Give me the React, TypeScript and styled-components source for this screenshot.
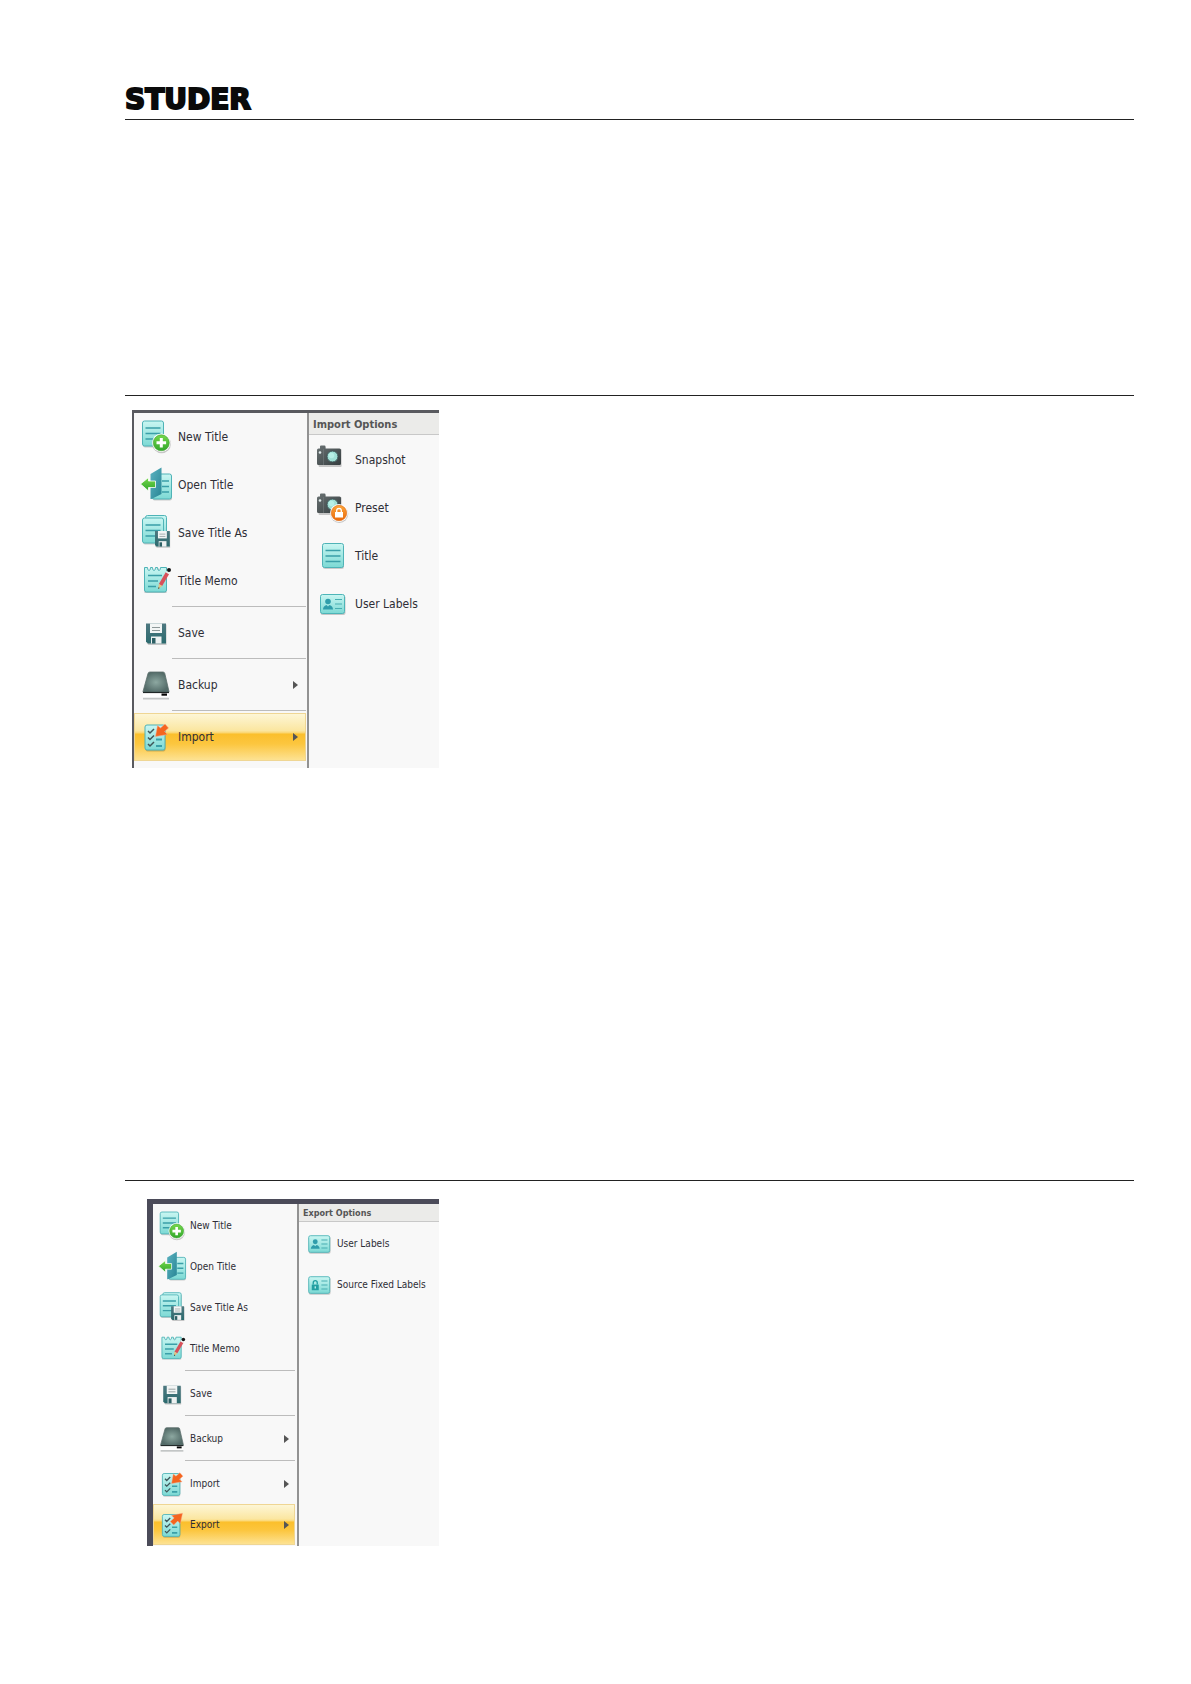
import React from "react";
import styled, { createGlobalStyle } from "styled-components";

const GlobalStyle = createGlobalStyle`
  * { box-sizing: border-box; }
  body { margin: 0; background: #fff; }
`;

const Page = styled.div`
  min-height: 100vh;
  padding: 86px 57px 0 125px;
  font-family: "DejaVu Sans Condensed", "DejaVu Sans", sans-serif;
  color: #333;
`;

const Header = styled.header`
  height: 33px;
`;

const Brand = styled.h1`
  margin: 0;
  font: bold 28px/28px "DejaVu Sans", sans-serif;
  color: #0a0a0a;
  -webkit-text-stroke: 2px #0a0a0a;
`;

const Section = styled.section<{ $space?: number; $inset?: number; $top?: number }>`
  border-top: 1px solid #222;
  padding: ${(p) => p.$top ?? 0}px 0 0 ${(p) => p.$inset ?? 0}px;
  margin-bottom: ${(p) => p.$space ?? 0}px;
`;

const Window = styled.div<{ $small?: boolean }>`
  display: flex;
  width: ${(p) => (p.$small ? 292 : 307)}px;
  max-width: 100%;
  border-style: solid;
  border-width: ${(p) => (p.$small ? "5px 0 0 6px" : "3px 0 0 2px")};
  border-color: ${(p) => (p.$small ? "#4b4b59" : "#595a5f")};
  background: #f8f8f8;
  font-size: ${(p) => (p.$small ? 10 : 12)}px;
`;

const Menu = styled.nav<{ $small?: boolean }>`
  display: flex;
  flex-direction: column;
  flex: none;
  width: ${(p) => (p.$small ? 146 : 175)}px;
  padding: ${(p) => (p.$small ? "1px 2px 1px 0" : "0 1px 7px 0")};
  border-right: 2px solid #929292;
`;

const Item = styled.button<{ $small?: boolean; $active?: boolean }>`
  display: flex;
  align-items: center;
  gap: ${(p) => (p.$small ? 4 : 6)}px;
  width: 100%;
  height: ${(p) => (p.$small ? 41 : 48)}px;
  padding: 0 ${(p) => (p.$small ? 5 : 7)}px 0 ${(p) => (p.$small ? 4 : 5)}px;
  border: 1px solid ${(p) => (p.$active ? "#efd694" : "transparent")};
  background: ${(p) =>
    p.$active
      ? "linear-gradient(#fdf6d6 0%, #fbe6a0 36%, #fbda7c 40%, #fbbf2c 44%, #fcc63f 65%, #fde292 100%)"
      : "none"};
  font: inherit;
  color: #2e2e36;
  text-align: left;
  white-space: nowrap;
`;

const Label = styled.span`
  flex: 1;
`;

const Separator = styled.hr<{ $small?: boolean }>`
  width: auto;
  height: 4px;
  margin: 0 0 0 ${(p) => (p.$small ? 32 : 38)}px;
  border: 0;
  background: linear-gradient(#bcbcbc, #bcbcbc) 0 1px / 100% 1px no-repeat;
`;

const Arrow = styled.span`
  width: 0;
  height: 0;
  border-style: solid;
  border-width: 4px 0 4px 5px;
  border-color: transparent transparent transparent #555;
`;

const Options = styled.div`
  flex: 1;
  min-width: 0;
`;

const OptionsTitle = styled.h2<{ $small?: boolean }>`
  height: ${(p) => (p.$small ? 18 : 22)}px;
  margin: 0 0 1px;
  padding-left: 4px;
  border-bottom: 1px solid #c8c8c8;
  background: #ebebe9;
  font-size: ${(p) => (p.$small ? 9 : 11)}px;
  line-height: ${(p) => (p.$small ? 18 : 23)}px;
  color: #565656;
  white-space: nowrap;
`;

const IconBox = styled.svg<{ $small?: boolean }>`
  flex: none;
  width: ${(p) => (p.$small ? 28 : 32)}px;
  height: ${(p) => (p.$small ? 28 : 32)}px;
  overflow: visible;
`;

const OptionItem = styled(Item)`
  gap: ${(p) => (p.$small ? 6 : 9)}px;
  padding-left: ${(p) => (p.$small ? 3 : 4)}px;
`;

type IconName =
  | "new" | "open" | "saveAs" | "memo" | "save" | "backup" | "import" | "export"
  | "snapshot" | "preset" | "title" | "labels" | "fixed";

const HiddenSvg = styled.svg`
  display: block;
`;

const Defs = () => (
  <HiddenSvg width="0" height="0" aria-hidden="true">
    <defs>
      <linearGradient id="aqua" x1="0" y1="0" x2="0" y2="1">
        <stop offset="0" stopColor="#c9f6f2" />
        <stop offset="1" stopColor="#7cd9d4" />
      </linearGradient>
      <linearGradient id="door" x1="0" y1="0" x2="1" y2="1">
        <stop offset="0" stopColor="#5cb3c1" />
        <stop offset="1" stopColor="#278594" />
      </linearGradient>
      <linearGradient id="green" x1="0" y1="0" x2="0" y2="1">
        <stop offset="0" stopColor="#76d84c" />
        <stop offset="1" stopColor="#31a72b" />
      </linearGradient>
      <linearGradient id="steel" x1="0" y1="0" x2="0" y2="1">
        <stop offset="0" stopColor="#4e7880" />
        <stop offset="1" stopColor="#2b6a6e" />
      </linearGradient>
      <radialGradient id="drive">
        <stop offset="0" stopColor="#8da8a1" />
        <stop offset="1" stopColor="#536b68" />
      </radialGradient>
      <linearGradient id="body" x1="0" y1="0" x2="1" y2="1">
        <stop offset="0" stopColor="#6a7273" />
        <stop offset="1" stopColor="#353d3f" />
      </linearGradient>
      <linearGradient id="orange" x1="0" y1="0" x2="0" y2="1">
        <stop offset="0" stopColor="#fba53a" />
        <stop offset="1" stopColor="#ea6a0c" />
      </linearGradient>
    </defs>
  </HiddenSvg>
);

const Sheet = ({ x, y, w = 21, h = 25, lines = true }: { x: number; y: number; w?: number; h?: number; lines?: boolean }) => (
  <g>
    <rect x={x + 0.5} y={y + 1.5} width={w} height={h} rx="2" fill="#000" opacity=".18" />
    <rect x={x} y={y} width={w} height={h} rx="2" fill="url(#aqua)" stroke="#4fb3b7" />
    {lines && (
      <path
        d={`M${x + 3} ${y + 7}h${w - 6}M${x + 3} ${y + 12.5}h${w - 6}M${x + 3} ${y + 18}h${w - 6}`}
        stroke="#3a9fa8"
        strokeWidth="1.7"
      />
    )}
  </g>
);

const Floppy = () => (
  <g>
    <path d="M0 0H20V20.500H2L0 18.500Z" fill="#000" opacity=".2" transform="translate(.5 1)" />
    <path d="M0 0H20V20H2L0 18Z" fill="url(#steel)" />
    <rect x="4" y="0" width="12" height="9.500" fill="#f2f5f5" />
    <path d="M6 4h8M6 7h8" stroke="#8d9899" strokeWidth="1" />
    <rect x="5" y="13" width="10.500" height="7" fill="#edf1f1" />
    <rect x="6" y="14.500" width="3.500" height="5.500" fill="#2c5f64" />
  </g>
);

const Camera = () => (
  <g>
    <path d="M4 5Q4 4 5 4H6V2H11V4H26Q27 4 27 5V21Q27 22 26 22H5Q4 22 4 21Z" fill="#000" opacity=".2" transform="translate(.6 1)" />
    <path d="M3 6Q3 4.500 4.500 4.500H6V2.500Q6 1.500 7 1.500H10.500Q11.500 1.500 11.500 2.500V4.500H25.500Q27 4.500 27 6V19.500Q27 21 25.500 21H4.500Q3 21 3 19.500Z" fill="url(#body)" />
    <path d="M9.500 5V21" stroke="#737c7d" strokeWidth=".6" />
    <circle cx="6" cy="8.500" r="1.300" fill="#e3eeee" />
    <circle cx="18.500" cy="12.500" r="5.500" fill="#a0e0d6" stroke="#3c5557" strokeWidth="1" />
    <circle cx="17.500" cy="11.500" r="2.800" fill="#b7efe6" />
  </g>
);

const Checklist = () => (
  <g>
    <Sheet x={5} y={4} w={20} h={25} lines={false} />
    <path d="M8 10l2 2 4-4M8 16.500l2 2 4-4M8 23l2 2 4-4" fill="none" stroke="#3f5659" strokeWidth="1.500" />
    <path d="M16 18.500h6M16 25h6" stroke="#3a9fa8" strokeWidth="1.800" />
  </g>
);

const Card = () => (
  <g>
    <rect x="6.500" y="7.500" width="25" height="19.500" rx="2" fill="#000" opacity=".2" />
    <rect x="6.500" y="6.500" width="24" height="19" rx="2" fill="url(#aqua)" stroke="#4db5b8" />
    <path d="M21 11.500h7M21 16h7M21 20.500h7" stroke="#48aeb2" strokeWidth="1.200" />
  </g>
);

const drawings: Record<IconName, React.ReactNode> = {
  new: (
    <>
      <Sheet x={2.5} y={0} />
      <circle cx="21.600" cy="23" r="9.300" fill="#000" opacity=".2" />
      <circle cx="21.300" cy="21.800" r="9.200" fill="#fff" />
      <circle cx="21.300" cy="21.800" r="8" fill="url(#green)" stroke="#3a9f2e" strokeWidth=".6" />
      <path d="M21.300 17v9.600M16.500 21.800h9.600" stroke="#fff" strokeWidth="3" />
    </>
  ),
  open: (
    <>
      <Sheet x={12} y={5} w={19.5} h={25} lines={false} />
      <path d="M22 12h7M22 17.500h7M22 23h7" stroke="#3a9fa8" strokeWidth="1.700" />
      <path d="M10.500 5L21.500 -1.500V25L11.500 30H10.500Z" fill="url(#door)" />
      <path d="M.5 15L8.500 8.500V12H15.500V18.500H8.500V22Z" fill="url(#green)" stroke="#fff" strokeWidth=".8" />
    </>
  ),
  saveAs: (
    <>
      <Sheet x={5.5} y={-1.5} lines={false} />
      <Sheet x={2.5} y={1} />
      <g transform="translate(15 14) scale(.74 .78)"><Floppy /></g>
    </>
  ),
  memo: (
    <>
      <path d="M4.500 3.500H7V6H10V3.500H13V6H16V3.500H19V6H22V3.500H26.500V28H4.500Z" fill="#000" opacity=".2" />
      <path d="M4.500 2.500H7.500Q7.500 5.500 9 5.500T10.500 2.500H12.500Q12.500 5.500 14 5.500T15.500 2.500H17.500Q17.500 5.500 19 5.500T20.500 2.500H26.500V25Q26.500 27 24.500 27H6.500Q4.500 27 4.500 25Z" fill="url(#aqua)" stroke="#4fb3b7" />
      <path d="M8 10.500h14M8 16h10M8 21.500h8" stroke="#3a9fa8" strokeWidth="1.700" />
      <path d="M27.500 8L20.500 20" stroke="#d8505a" strokeWidth="3.800" />
      <path d="M18.800 19L22.200 21L18.300 24Z" fill="#e8c07c" />
      <path d="M18.500 22.200L19.700 23L18.200 24Z" fill="#222" />
      <path d="M27.300 8.300L28.300 6.600" stroke="#eee" strokeWidth="3.800" />
      <circle cx="29" cy="5" r="2" fill="#151515" />
    </>
  ),
  save: <g transform="translate(6 6.500)"><Floppy /></g>,
  backup: (
    <>
      <rect x="3" y="28.500" width="26" height="2" fill="#c3c6c6" />
      <path d="M3 23.500H29V28.500H3Z" fill="#fff" />
      <path d="M8 4.500Q8.300 3 10 3H23Q24.500 3 24.800 4.500L29 22.500Q29 23.500 28 23.500H4Q3 23.500 3 22.500Z" fill="url(#drive)" stroke="#5b6d6b" strokeWidth=".8" />
      <path d="M3 23.500H29" stroke="#1f2727" strokeWidth="1.200" />
      <rect x="21.500" y="24.500" width="5.500" height="2.200" fill="#050505" />
    </>
  ),
  import: (
    <>
      <Checklist />
      <path d="M15.500 15.500L17.500 4.500L20.500 7L25 3L28.500 7L24.500 10.500L27.500 13.500Z" fill="#f4651f" stroke="#fba98a" strokeWidth=".5" />
    </>
  ),
  export: (
    <>
      <Checklist />
      <path d="M28 2.500L25.500 14.500L22.500 11.500L18 16L14 12L18.500 8L15.500 5Z" fill="#f4651f" stroke="#fba98a" strokeWidth=".5" />
    </>
  ),
  snapshot: <Camera />,
  preset: (
    <>
      <Camera />
      <circle cx="25.300" cy="22" r="9" fill="#000" opacity=".2" />
      <circle cx="25" cy="21" r="8.900" fill="#fff" />
      <circle cx="25" cy="21" r="7.700" fill="url(#orange)" stroke="#dd6810" strokeWidth=".6" />
      <rect x="21" y="20" width="8" height="5.500" fill="#fff" />
      <path d="M22.700 20V18.500Q22.700 16.500 25 16.500T27.300 18.500V20" fill="none" stroke="#fff" strokeWidth="1.300" />
    </>
  ),
  title: <Sheet x={8.5} y={3.5} w={21} h={24} />,
  labels: (
    <>
      <Card />
      <circle cx="14" cy="13.500" r="2.800" fill="#2f9dab" />
      <path d="M9 21.500Q9 18 12.500 17L14 18.500L15.500 17Q19 18 19 21.500Z" fill="#2f9dab" />
    </>
  ),
  fixed: (
    <>
      <Card />
      <rect x="10" y="15.500" width="8" height="6.500" fill="#239fa2" />
      <path d="M11.700 15.500V13.500Q11.700 11 14 11T16.300 13.500V15.500" fill="none" stroke="#239fa2" strokeWidth="1.500" />
      <rect x="13.300" y="17.500" width="1.400" height="2.500" fill="#c9f6f2" />
    </>
  ),
};

const Icon = ({ name, small }: { name: IconName; small?: boolean }) => (
  <IconBox viewBox="0 0 32 32" $small={small} aria-hidden="true">
    {drawings[name]}
  </IconBox>
);

type Entry = { icon: IconName; label: string; submenu?: boolean; ruled?: boolean };

const entries: Entry[] = [
  { icon: "new", label: "New Title" },
  { icon: "open", label: "Open Title" },
  { icon: "saveAs", label: "Save Title As" },
  { icon: "memo", label: "Title Memo" },
  { icon: "save", label: "Save", ruled: true },
  { icon: "backup", label: "Backup", submenu: true, ruled: true },
  { icon: "import", label: "Import", submenu: true, ruled: true },
];

type MenuWindowProps = { small?: boolean; items: Entry[]; active: string; heading: string; options: Entry[] };

const MenuWindow = ({ small, items, active, heading, options }: MenuWindowProps) => (
  <Window $small={small}>
    <Menu $small={small}>
      {items.map((item) => (
        <React.Fragment key={item.label}>
          {item.ruled && <Separator $small={small} />}
          <Item type="button" $small={small} $active={item.label === active}>
            <Icon name={item.icon} small={small} />
            <Label>{item.label}</Label>
            {item.submenu && <Arrow />}
          </Item>
        </React.Fragment>
      ))}
    </Menu>
    <Options>
      <OptionsTitle $small={small}>{heading}</OptionsTitle>
      {options.map((option) => (
        <OptionItem type="button" key={option.label} $small={small}>
          <Icon name={option.icon} small={small} />
          <Label>{option.label}</Label>
        </OptionItem>
      ))}
    </Options>
  </Window>
);

export default function App() {
  return (
    <>
      <GlobalStyle />
      <Page>
        <Defs />
        <Header>
          <Brand>STUDER</Brand>
        </Header>
        <Section $space={275} />
        <Section $top={14} $inset={7} $space={412}>
          <MenuWindow
            items={entries}
            active="Import"
            heading="Import Options"
            options={[
              { icon: "snapshot", label: "Snapshot" },
              { icon: "preset", label: "Preset" },
              { icon: "title", label: "Title" },
              { icon: "labels", label: "User Labels" },
            ]}
          />
        </Section>
        <Section $top={18} $inset={22}>
          <MenuWindow
            small
            items={[...entries, { icon: "export", label: "Export", submenu: true }]}
            active="Export"
            heading="Export Options"
            options={[
              { icon: "labels", label: "User Labels" },
              { icon: "fixed", label: "Source Fixed Labels" },
            ]}
          />
        </Section>
      </Page>
    </>
  );
}
